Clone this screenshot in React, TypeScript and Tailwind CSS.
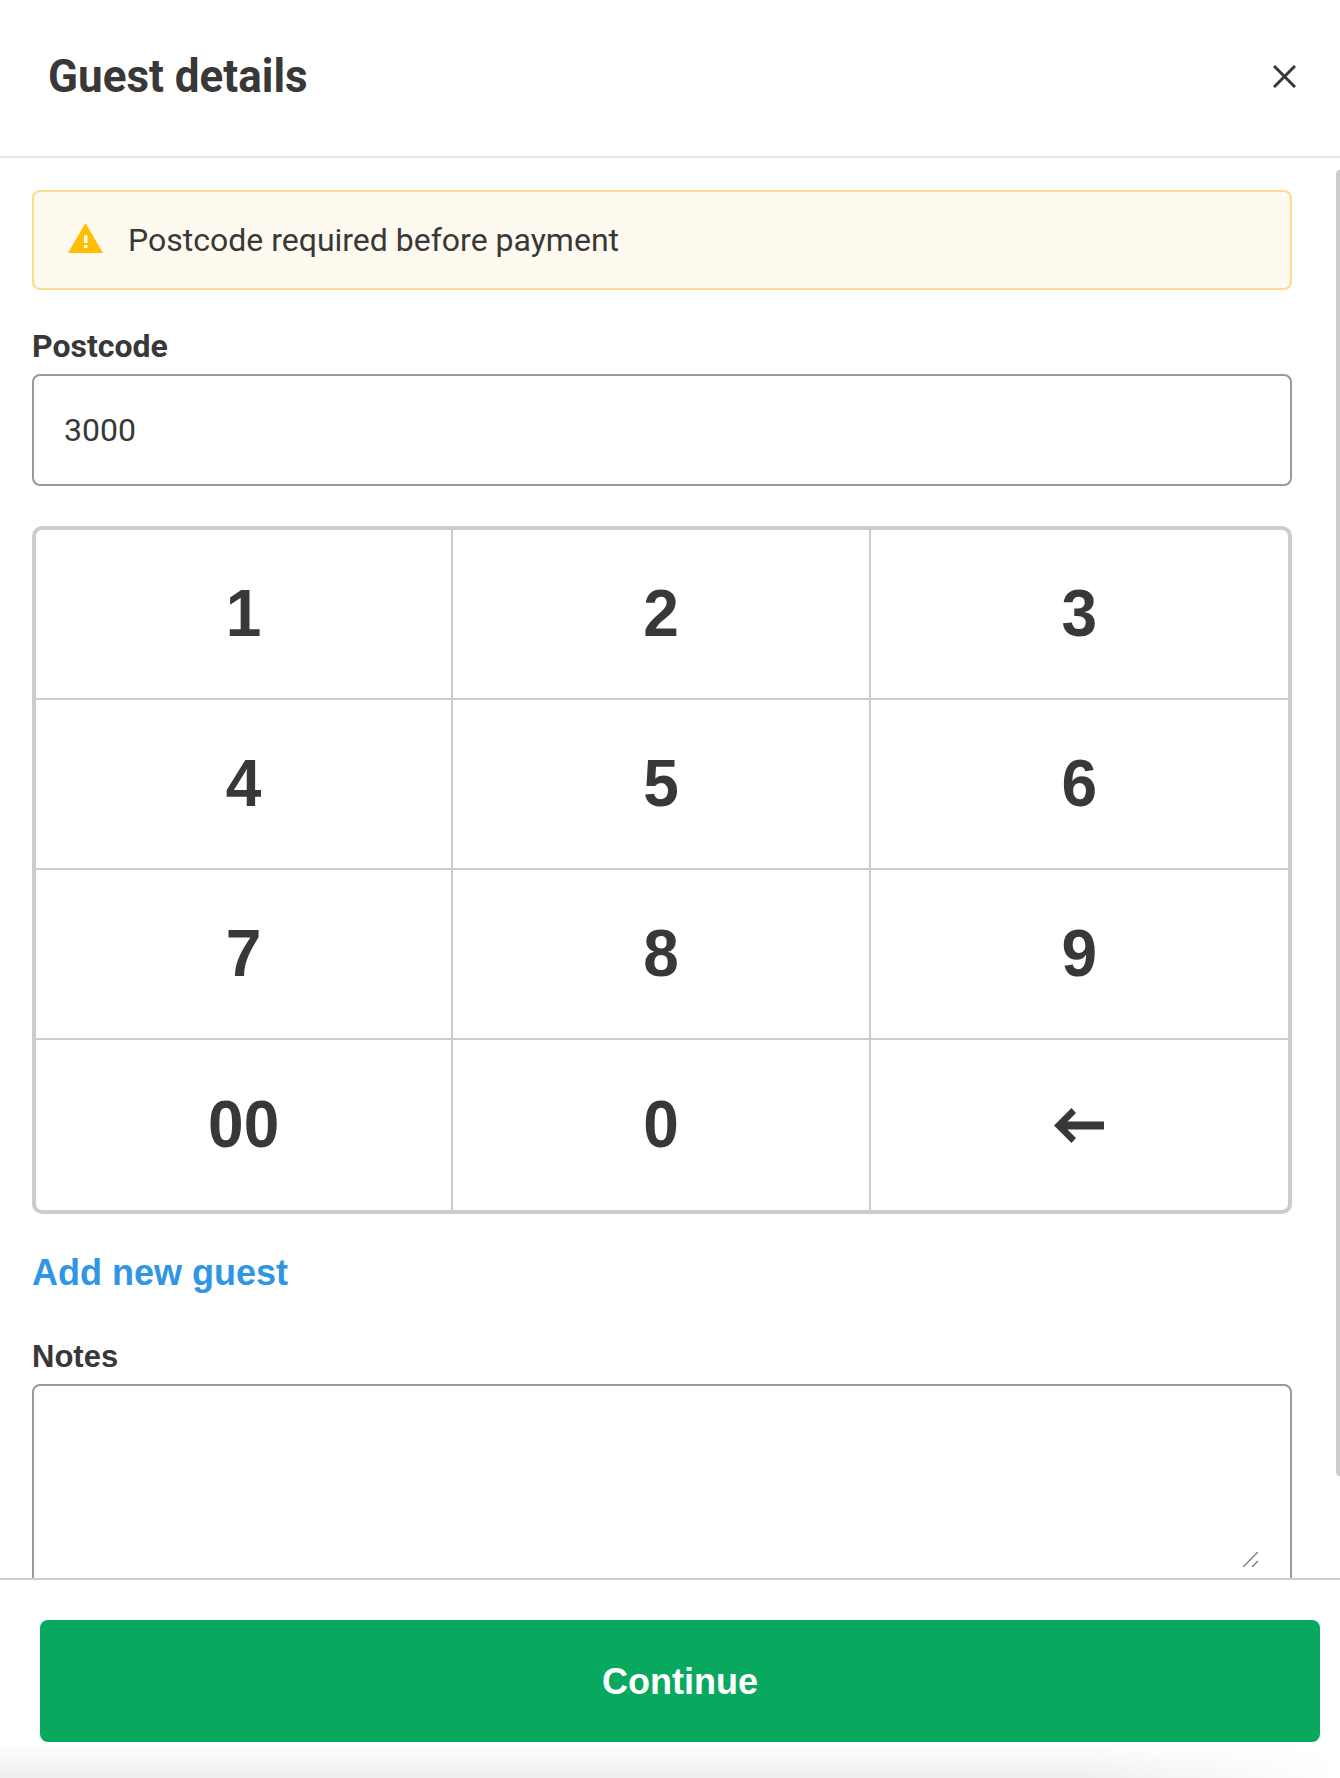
import React from "react";

const keys = ["1", "2", "3", "4", "5", "6", "7", "8", "9", "00", "0"];

function Key({ label }: { label: string }) {
  return (
    <button className="flex items-center justify-center border-r-2 border-b-2 border-[#cccccc] pb-[2px] text-[64px] leading-none font-bold text-[#383838] font-['Liberation_Sans',sans-serif] [&:nth-child(3n)]:border-r-0 [&:nth-child(n+10)]:border-b-0">
      <span className="inline-block scale-y-[1.04]">{label}</span>
    </button>
  );
}

export default function App() {
  return (
    <div className="relative flex h-[1778px] w-[1340px] flex-col overflow-hidden bg-white font-['Roboto',sans-serif] text-[#383838]">
      <header className="flex h-[158px] shrink-0 items-center justify-between border-b-2 border-[#e6e6e6] pr-[44px] pb-[3px] pl-[48px]">
        <h1 className="mb-[2px] inline-block scale-y-[1.05] text-[44px] leading-none font-bold">Guest details</h1>
        <svg width="23" height="23" viewBox="0 0 23 23" fill="none" stroke="#383838" strokeWidth="3">
          <path d="M1 1 22 22M22 1 1 22" />
        </svg>
      </header>

      <main className="relative min-h-0 flex-1 overflow-hidden pt-[32px] pr-[48px] pl-[32px]">
        <div className="flex h-[100px] items-center rounded-lg border-2 border-[#fbdc8e] bg-[#fffaf0] pl-[34px]">
          <svg width="35" height="30" viewBox="0 0 35 30" className="mr-[25px] mb-[4px]">
            <path d="M17.5 0 35 30H0Z" fill="#ffbf00" />
            <rect x="16" y="12" width="3.5" height="8" fill="#fffaf0" />
            <rect x="16" y="22" width="3.5" height="3" fill="#fffaf0" />
          </svg>
          <span className="text-[32px] leading-none text-[#383838]">Postcode required before payment</span>
        </div>

        <label className="mt-[34px] mb-[6px] block text-[32px] leading-[44px] font-bold">Postcode</label>
        <div className="flex h-[112px] items-center rounded-lg border-2 border-[#999999] px-[30px] text-[32px]">3000</div>

        <div className="mt-[40px] grid h-[688px] grid-cols-3 grid-rows-4 overflow-hidden rounded-[10px] border-4 border-[#cccccc]">
          {keys.map((k) => (
            <Key key={k} label={k} />
          ))}
          <button className="flex items-center justify-center">
            <svg width="50" height="35" viewBox="0 0 50 35">
              <path d="M0 17.5 17.5 0 22 5 13.5 13.5H50V21.5H13.5L22 30 17.5 35Z" fill="#383838" />
            </svg>
          </button>
        </div>

        <a className="mt-[35px] block text-[36px] leading-[48px] font-bold text-[#2f96e6] font-['Liberation_Sans',sans-serif]">Add new guest</a>

        <label className="mt-[38px] mb-[5px] block text-[31px] leading-[44px] font-bold font-['Liberation_Sans',sans-serif]">Notes</label>
        <div className="relative h-[240px] rounded-lg border-2 border-[#999999]">
          <svg width="15" height="15" viewBox="0 0 15 15" className="absolute top-[166px] right-[32px]" fill="none" stroke="#666666" strokeWidth="1.2">
            <path d="M0 15 15 0M9 15 15 9" />
          </svg>
        </div>

        <div className="absolute top-[12px] right-0 h-[1306px] w-[4px] rounded-l bg-[#cccccc]" />
      </main>

      <footer className="relative shrink-0 border-t-2 border-[#cccccc] bg-[linear-gradient(to_right,transparent_80%,white_100%),linear-gradient(to_bottom,white_calc(100%-36px),#eeeeee_100%)] pt-[40px] pr-[20px] pb-[36px] pl-[40px]">
        <button className="flex h-[122px] w-full items-center justify-center rounded-lg bg-[#08a85e] pt-[2px] text-[36px] font-bold text-white font-['Liberation_Sans',sans-serif]">
          Continue
        </button>
      </footer>
    </div>
  );
}
